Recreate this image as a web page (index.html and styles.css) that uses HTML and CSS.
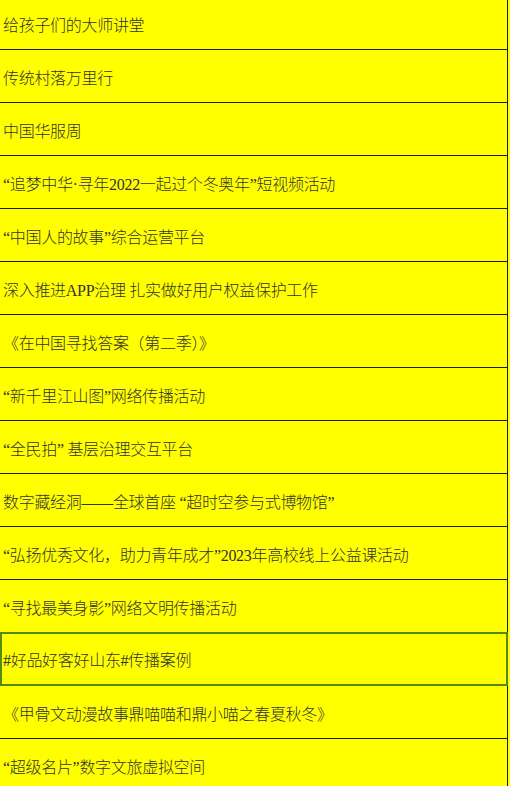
FILE: index.html
```html
<!DOCTYPE html>
<html lang="zh">
<head>
<meta charset="utf-8">
<link rel="stylesheet" href="styles.css">
</head>
<body>
<ul class="list">
  <li class="row">给孩子们的大师讲堂</li>
  <li class="row">传统村落万里行</li>
  <li class="row">中国华服周</li>
  <li class="row">“追梦中华·寻年2022一起过个冬奥年”短视频活动</li>
  <li class="row">“中国人的故事”综合运营平台</li>
  <li class="row">深入推进APP治理 扎实做好用户权益保护工作</li>
  <li class="row">《在中国寻找答案（第二季）》</li>
  <li class="row">“新千里江山图”网络传播活动</li>
  <li class="row">“全民拍” 基层治理交互平台</li>
  <li class="row">数字藏经洞——全球首座 “超时空参与式博物馆”</li>
  <li class="row">“弘扬优秀文化，助力青年成才”2023年高校线上公益课活动</li>
  <li class="row">“寻找最美身影”网络文明传播活动</li>
  <li class="row row-active">#好品好客好山东#传播案例</li>
  <li class="row">《甲骨文动漫故事鼎喵喵和鼎小喵之春夏秋冬》</li>
  <li class="row">“超级名片”数字文旅虚拟空间</li>
</ul>
</body>
</html>
```

FILE: styles.css
```css
html, body {
  margin: 0;
  padding: 0;
  background: #ffff00;
}
body {
  overflow: hidden;
  height: 786px;
}
.list {
  list-style: none;
  margin: -3px 0 0 0;
  padding: 0;
  width: 508px;
  font-family: "Liberation Serif", "Noto Sans CJK SC", serif;
  font-size: 16px;
  font-weight: 300;
  letter-spacing: -0.3px;
  color: #333333;
}
.row {
  box-sizing: border-box;
  height: 53px;
  display: flex;
  align-items: center;
  padding: 1px 0 0 3px;
  border-bottom: 1px solid #1c1c1c;
  border-right: 1px solid #1c1c1c;
  background: #ffff00;
  white-space: nowrap;
}
.row-active {
  height: 54px;
  margin-top: -1px;
  padding: 0 0 0 1px;
  border: 2px solid #548c10;
}
```
